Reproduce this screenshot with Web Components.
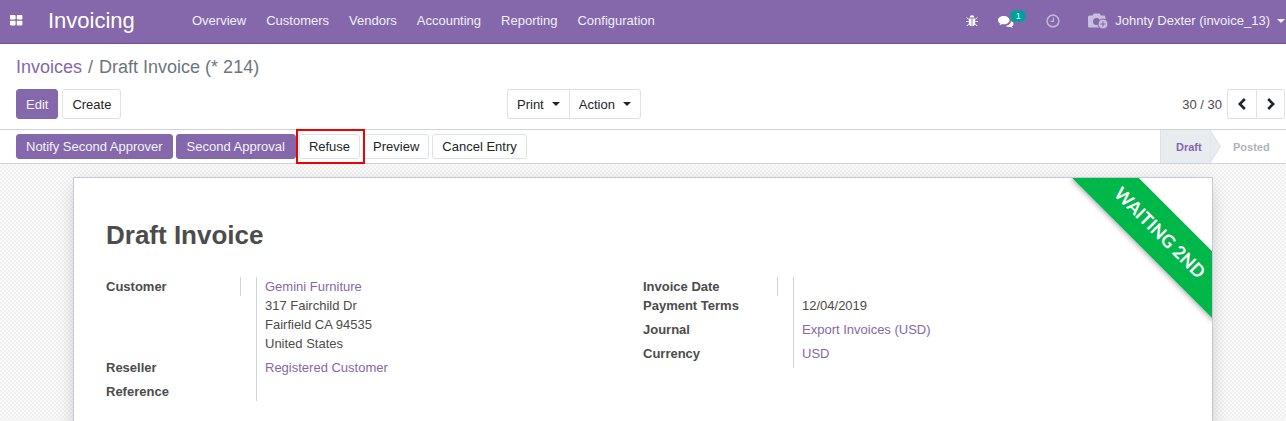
<!DOCTYPE html>
<html>
<head>
<meta charset="utf-8">
<title>Invoicing</title>
<style>
    html, body { margin: 0; height: 100%; overflow: hidden; }
    body { font-family: "Liberation Sans", Arial, sans-serif; font-size: 13px; color: #4c4c4c; background: #fff; }
</style>
</head>
<body>
<inv-app>
    <inv-navbar></inv-navbar>
    <inv-control-panel></inv-control-panel>
    <inv-statusbar>
        <inv-button variant="primary">Notify Second Approver</inv-button>
        <inv-button variant="primary" style="padding: 0 10px">Second Approval</inv-button>
        <inv-button marked>Refuse</inv-button>
        <inv-button>Preview</inv-button>
        <inv-button>Cancel Entry</inv-button>
    </inv-statusbar>
    <inv-sheet>
        <inv-group>
            <inv-field sep>
                <span slot="label">Customer</span>
                <a>Gemini Furniture</a><br>317 Fairchild Dr<br>Fairfield CA 94535<br>United States
            </inv-field>
            <inv-field>
                <span slot="label">Reseller</span>
                <a>Registered Customer</a>
            </inv-field>
            <inv-field last>
                <span slot="label">Reference</span>
            </inv-field>
        </inv-group>
        <inv-group>
            <inv-field sep last>
                <span slot="label">Invoice Date</span>
            </inv-field>
            <inv-field>
                <span slot="label">Payment Terms</span>
                12/04/2019
            </inv-field>
            <inv-field>
                <span slot="label">Journal</span>
                <a>Export Invoices (USD)</a>
            </inv-field>
            <inv-field>
                <span slot="label">Currency</span>
                <a>USD</a>
            </inv-field>
        </inv-group>
    </inv-sheet>
</inv-app>

<script>
class InvApp extends HTMLElement {
    constructor() {
        super();
        this.attachShadow({ mode: 'open' });
        this.shadowRoot.innerHTML = `
            <style>
                :host { display: flex; flex-direction: column; height: 100vh; overflow: hidden; }
            </style>
            <slot></slot>
        `;
    }
}

class InvNavbar extends HTMLElement {
    constructor() {
        super();
        this.attachShadow({ mode: 'open' });
        this.shadowRoot.innerHTML = `
            <style>
                :host {
                    display: flex;
                    align-items: center;
                    flex: none;
                    height: 41px;
                    padding-bottom: 2px;
                    background: #8468ab;
                    border-bottom: 1px solid #6d548f;
                    color: #fff;
                    font-size: 13px;
                }
                svg { display: block; flex: none; }
                .apps { margin-left: 10px; }
                .brand { margin-left: 25px; font-size: 22px; width: 144px; flex: none; }
                nav { display: flex; gap: 20px; color: #f2eef7; }
                .right { margin-left: auto; display: flex; align-items: center; color: #f2eef7; }
                .bug { margin-right: 20px; }
                .chat { position: relative; margin-right: 32px; }
                .badge {
                    position: absolute;
                    left: 12px;
                    top: -3px;
                    width: 16px;
                    height: 12px;
                    border-radius: 6px;
                    background: #00a09d;
                    color: #fff;
                    font-size: 9px;
                    line-height: 12px;
                    text-align: center;
                }
                .clock { margin-right: 28px; opacity: .5; }
                .user { margin-left: 6px; }
                .caret {
                    margin: 0 1px 0 7px;
                    border-top: 4px solid #f2eef7;
                    border-left: 4px solid transparent;
                    border-right: 4px solid transparent;
                }
            </style>
            <svg class="apps" width="13" height="11" viewBox="0 0 13 11" fill="#fff">
                <rect x="0" y="0" width="5.6" height="4.6" rx=".8"/><rect x="6.8" y="0" width="5.6" height="4.6" rx=".8"/>
                <rect x="0" y="5.8" width="5.6" height="4.6" rx=".8"/><rect x="6.8" y="5.8" width="5.6" height="4.6" rx=".8"/>
            </svg>
            <div class="brand">Invoicing</div>
            <nav>
                <span>Overview</span><span>Customers</span><span>Vendors</span><span>Accounting</span><span>Reporting</span><span>Configuration</span>
            </nav>
            <div class="right">
                <svg class="bug" width="12" height="12" viewBox="0 0 12 12" fill="#fff">
                    <path d="M3.6 2.6a2.4 2.4 0 0 1 4.8 0z"/>
                    <path d="M2.9 3.4h2.7v7.8c-1.6-.2-2.7-1.3-2.7-3zM6.4 3.4h2.7v4.8c0 1.7-1.1 2.8-2.7 3z"/>
                    <path d="M.7 2.2l2.2 1.7v.8L.2 2.8zM11.3 2.2L9.1 3.9v.8l2.7-1.9zM0 6.2h2.9v.9H0zM9.1 6.2H12v.9H9.1zM2.9 8.4l.4.7-2.2 2.2-.6-.6zM9.1 8.4l-.4.7 2.2 2.2.6-.6z"/>
                </svg>
                <div class="chat">
                    <svg width="16" height="14" viewBox="0 0 16 14" fill="#fff" style="margin-top:2px">
                        <path d="M5.8 1C2.6 1 0 2.9 0 5.2c0 1.4.9 2.6 2.3 3.3-.2.7-.6 1.3-1.1 1.8 1.1-.2 2-.6 2.8-1.2.6.1 1.2.2 1.8.2 3.2 0 5.8-1.9 5.8-4.1S9 1 5.8 1z"/>
                        <path d="M13 6.2c0 2.3-2.2 4.2-5.2 4.7.9.7 2 1 3.2 1 .5 0 1-.1 1.4-.2.6.5 1.4.9 2.4 1-.4-.4-.7-.9-.9-1.5 1-.6 1.6-1.5 1.6-2.5 0-1-.9-2-2.5-2.5z"/>
                    </svg>
                    <span class="badge">1</span>
                </div>
                <svg class="clock" width="14" height="14" viewBox="0 0 14 14" fill="none" stroke="#fff" stroke-width="1.6">
                    <circle cx="7" cy="7" r="5.9"/><path d="M7.4 3.4v4H4.4" stroke-width="1.2"/>
                </svg>
                <svg width="21" height="18" viewBox="0 0 21 18">
                    <path fill="#c9bedb" d="M1.5 3.5h3l1.2-2h6l1.2 2h3a1.5 1.5 0 0 1 1.5 1.5v9a1.5 1.5 0 0 1-1.5 1.5H1.5A1.5 1.5 0 0 1 0 14V5a1.5 1.5 0 0 1 1.5-1.5z"/>
                    <circle cx="8.5" cy="9.5" r="3.5" fill="#8468ab"/>
                    <circle cx="15" cy="12" r="5" fill="#c9bedb" stroke="#8468ab" stroke-width="1"/>
                    <path d="M15 9.5v5M12.5 12h5" stroke="#8468ab" stroke-width="1.1"/>
                </svg>
                <span class="user">Johnty Dexter (invoice_13)</span>
                <span class="caret"></span>
            </div>
        `;
    }
}

class InvButton extends HTMLElement {
    constructor() {
        super();
        this.attachShadow({ mode: 'open' });
        this.shadowRoot.innerHTML = `
            <style>
                :host {
                    display: inline-flex;
                    align-items: center;
                    position: relative;
                    box-sizing: border-box;
                    height: 25px;
                    padding: 0 9px;
                    background: #fff;
                    border: 1px solid #dee2e6;
                    border-radius: 3px;
                    color: #212529;
                    font-size: 13px;
                    white-space: nowrap;
                }
                :host([variant="primary"]) {
                    background: #8468ab;
                    border-color: #8468ab;
                    color: #f4f1f8;
                }
                :host([tall]) { height: 30px; }
                :host([marked]) { z-index: 2; }
                /* recuadro rojo de la captura, va encima del boton */
                :host([marked])::after {
                    content: "";
                    position: absolute;
                    left: -4px;
                    right: -6px;
                    top: -6px;
                    bottom: -6px;
                    border: 2px solid #f00000;
                }
            </style>
            <slot></slot>
        `;
    }
}

class InvControlPanel extends HTMLElement {
    constructor() {
        super();
        this.attachShadow({ mode: 'open' });
        this.shadowRoot.innerHTML = `
            <style>
                :host {
                    display: block;
                    flex: none;
                    box-sizing: border-box;
                    height: 86px;
                    padding: 13px 1px 0 16px;
                    border-bottom: 1px solid #ced4da;
                    background: #fff;
                }
                .crumbs { font-size: 18px; line-height: 21px; height: 32px; color: #6c757d; }
                .crumbs a { color: #8468ab; }
                .crumbs i { font-style: normal; padding: 0 1px 0 1px; }
                .bar { display: grid; grid-template-columns: 491px 1fr auto; align-items: center; }
                .left { display: flex; gap: 4px; }
                .mid { display: flex; }
                .mid inv-button:first-child { border-radius: 3px 0 0 3px; border-right: 0; }
                .mid inv-button:last-child { border-radius: 0 3px 3px 0; }
                .caret {
                    margin-left: 8px;
                    border-top: 4px solid #212529;
                    border-left: 4px solid transparent;
                    border-right: 4px solid transparent;
                }
                .pager { display: flex; align-items: center; justify-content: flex-end; gap: 5px; color: #4c4c4c; }
                .arrows { display: flex; }
                .arrows inv-button { width: 29px; padding: 0; justify-content: center; }
                .arrows inv-button:first-child { border-radius: 3px 0 0 3px; border-right: 0; }
                .arrows inv-button:last-child { border-radius: 0 3px 3px 0; }
                svg { display: block; }
            </style>
            <div class="crumbs"><a>Invoices</a> <i>/</i> Draft Invoice (* 214)</div>
            <div class="bar">
                <div class="left">
                    <inv-button tall variant="primary">Edit</inv-button>
                    <inv-button tall>Create</inv-button>
                </div>
                <div class="mid">
                    <inv-button tall>Print<span class="caret"></span></inv-button>
                    <inv-button tall>Action<span class="caret"></span></inv-button>
                </div>
                <div class="pager">
                    <span>30 / 30</span>
                    <div class="arrows">
                        <inv-button tall>
                            <svg width="8" height="12" viewBox="0 0 8 12" fill="none" stroke="#212529" stroke-width="2.6"><path d="M6.8 1L1.8 6l5 5"/></svg>
                        </inv-button>
                        <inv-button tall>
                            <svg width="8" height="12" viewBox="0 0 8 12" fill="none" stroke="#212529" stroke-width="2.6"><path d="M1.2 1l5 5-5 5"/></svg>
                        </inv-button>
                    </div>
                </div>
            </div>
        `;
    }
}

class InvStatusbar extends HTMLElement {
    constructor() {
        super();
        this.attachShadow({ mode: 'open' });
        this.shadowRoot.innerHTML = `
            <style>
                :host {
                    display: flex;
                    flex: none;
                    align-items: center;
                    justify-content: space-between;
                    box-sizing: border-box;
                    height: 34px;
                    padding-left: 16px;
                    border-bottom: 1px solid #ced4da;
                    background: #fff;
                }
                .buttons { display: flex; gap: 3px; }
                .steps { display: flex; align-self: stretch; font-size: 11px; font-weight: 700; }
                .step { display: flex; align-items: center; box-sizing: border-box; }
                .draft {
                    width: 50px;
                    padding-left: 15px;
                    background: #e9ecef;
                    color: #8468ab;
                    border-left: 1px solid #dee2e6;
                    position: relative;
                }
                .draft svg { position: absolute; left: 100%; top: 0; }
                .posted { width: 76px; padding-left: 23px; color: #adb5bd; }
            </style>
            <div class="buttons"><slot></slot></div>
            <div class="steps">
                <div class="step draft">Draft
                    <svg width="11" height="33" viewBox="0 0 11 33"><path d="M0 0l10.5 16.5L0 33z" fill="#e9ecef" stroke="#dee2e6"/></svg>
                </div>
                <div class="step posted">Posted</div>
            </div>
        `;
    }
}

class InvSheet extends HTMLElement {
    constructor() {
        super();
        this.attachShadow({ mode: 'open' });
        this.shadowRoot.innerHTML = `
            <style>
                :host {
                    display: block;
                    flex: 1;
                    min-height: 0;
                    padding: 13px 73px 0;
                    background-color: #fafafa;
                    background-image: conic-gradient(#f0f0f0 25%, transparent 0 50%, #f0f0f0 0 75%, transparent 0);
                    background-size: 4px 4px;
                }
                .sheet {
                    position: relative;
                    box-sizing: border-box;
                    height: 400px;
                    padding: 0 32px;
                    background: #fff;
                    border: 1px solid #c9c9d6;
                    box-shadow: 0 5px 20px -5px rgba(0, 0, 0, .25);
                }
                h1 {
                    margin: 0;
                    padding: 41px 0 26px;
                    font-size: 26px;
                    line-height: 32px;
                    font-weight: 700;
                    color: #4c4c4c;
                }
                .groups { display: grid; grid-template-columns: 1fr 1fr; align-items: start; }
                .ribbon { position: absolute; top: 0; right: 0; width: 160px; height: 160px; overflow: hidden; }
                .ribbon span {
                    position: absolute;
                    left: 8px;
                    top: 31px;
                    width: 200px;
                    height: 47px;
                    background: #00b74a;
                    box-shadow: 0 2px 5px rgba(0, 0, 0, .3);
                    transform: rotate(45deg);
                    color: #fff;
                    font-family: Lato, sans-serif;
                    font-size: 17.8px;
                    font-weight: 700;
                    line-height: 47px;
                    text-align: center;
                }
            </style>
            <div class="sheet">
                <div class="ribbon"><span>WAITING 2ND</span></div>
                <h1>Draft Invoice</h1>
                <div class="groups"><slot></slot></div>
            </div>
        `;
    }
}

class InvGroup extends HTMLElement {
    constructor() {
        super();
        this.attachShadow({ mode: 'open' });
        this.shadowRoot.innerHTML = `
            <style>
                :host { display: block; }
            </style>
            <slot></slot>
        `;
    }
}

class InvField extends HTMLElement {
    constructor() {
        super();
        this.attachShadow({ mode: 'open' });
        this.shadowRoot.innerHTML = `
            <style>
                :host {
                    display: grid;
                    grid-template-columns: 135px 15px 1fr;
                    font-size: 13px;
                    line-height: 19px;
                    --gap: 5px;
                }
                :host([last]) { --gap: 0px; }
                .label { font-weight: 700; height: 19px; box-sizing: border-box; white-space: nowrap; }
                :host([sep]) .label { border-right: 1px solid #ced4da; }
                .value {
                    grid-column: 3;
                    min-height: 19px;
                    padding: 0 0 var(--gap) 8px;
                    border-left: 1px solid #ced4da;
                }
                ::slotted(a) { color: #8468ab; }
            </style>
            <div class="label"><slot name="label"></slot></div>
            <div class="value"><slot></slot></div>
        `;
    }
}

customElements.define('inv-app', InvApp);
customElements.define('inv-navbar', InvNavbar);
customElements.define('inv-button', InvButton);
customElements.define('inv-control-panel', InvControlPanel);
customElements.define('inv-statusbar', InvStatusbar);
customElements.define('inv-sheet', InvSheet);
customElements.define('inv-group', InvGroup);
customElements.define('inv-field', InvField);
</script>
</body>
</html>
